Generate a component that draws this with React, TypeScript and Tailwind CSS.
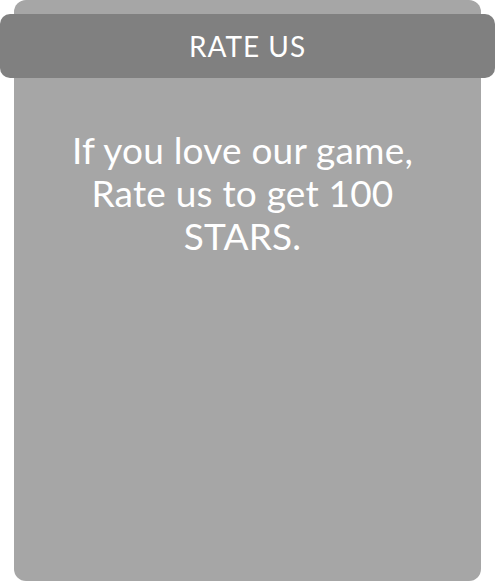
export default function App() {
  return (
    <div className="w-[495px] h-[581px] bg-white" style={{ fontFamily: 'Lato, "Open Sans", sans-serif' }}>
      <div className="mx-[14px] h-[581px] bg-[#a6a6a6] rounded-[12px] pt-[14px]">
        <div className="-mx-[14px] h-[64px] bg-[#808080] rounded-[10px] flex items-center justify-center">
          <span className="text-white text-[28px] tracking-[1px]">RATE US</span>
        </div>
        <p className="mt-[50px] pl-[34px] pr-[44px] text-center text-white text-[37px] leading-[43px] tracking-[0.2px]">
          If you love our game, Rate us to get 100 STARS.
        </p>
      </div>
    </div>
  );
}
